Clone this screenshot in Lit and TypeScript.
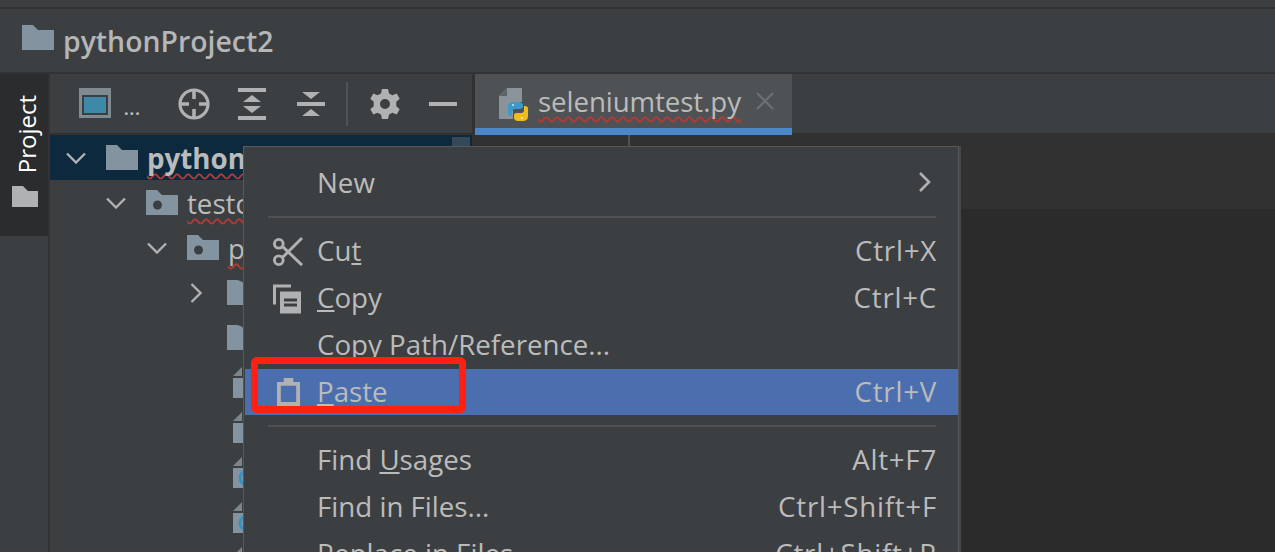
import { LitElement, html, css, svg } from "lit";
import { customElement } from "lit/decorators.js";

const chevDown = html`<svg class="chev" viewBox="0 0 20 12"><path d="M1 1.500 10 10.500 19 1.500" fill="none" stroke="#afb1b3" stroke-width="2.400"/></svg>`;
const chevRight = html`<svg class="chevr" viewBox="0 0 12 20"><path d="M1.500 1 10.500 10 1.500 19" fill="none" stroke="#afb1b3" stroke-width="2.400"/></svg>`;
const folderPath = "M0 0H11L16 5H32V25H0Z";
const folder = (dot = false) => html`<svg class="folder" width="32" height="25" viewBox="0 0 32 25">
  <path d=${folderPath} fill="#8393a0"/>${dot ? svg`<circle cx="11.500" cy="15" r="4.500" fill="#3c3f41"/>` : ""}</svg>`;
const fileIcon = (blue = false) => html`<svg width="26" height="32" viewBox="0 0 26 32">
  <path d="M10 0V9H1Z" fill="#7a858c"/><path d="M1 11H26V31H1Z" fill="#8393a0"/>
  ${blue ? svg`<circle cx="15" cy="21" r="7" fill="none" stroke="#3592c4" stroke-width="3"/>` : ""}</svg>`;
const pageIcon = html`<svg width="26" height="26" viewBox="0 0 26 26"><path d="M0 0H10C16 1 18 4 20 10V25H0Z" fill="#8393a0"/></svg>`;

@customElement("app-root")
export class AppRoot extends LitElement {
  static styles = css`
    :host { display: block; width: 1275px; height: 552px; overflow: hidden; position: relative; background: #3c3f41;
      font-family: "Open Sans", "Noto Sans", sans-serif; color: #bbbbbb; }
    .top { height: 7px; }
    .crumbs { height: 63px; border-top: 2px solid #323232; border-bottom: 2px solid #323232; display: flex; align-items: center; padding-left: 22px; gap: 9px; font-size: 28.4px; font-weight: 600; color: #b4b6b8; }
    .crumbs .folder { margin-bottom: 6px; }
    .main { display: flex; height: 478px; }
    .stripe { width: 48px; flex: none; border-right: 2px solid #323232; }
    .tool-tab { height: 162px; background: #2b2c2e; display: flex; flex-direction: column; align-items: center; justify-content: flex-end; padding-bottom: 29px; box-sizing: border-box; gap: 13px; }
    .tool-tab svg { margin-left: 2px; }
    .vlabel { writing-mode: vertical-rl; transform: rotate(180deg); color: #fff; font-size: 24px; line-height: 30px; margin-left: 5px; }
    .panel { width: 422px; flex: none; display: flex; flex-direction: column; }
    .toolbar { height: 59px; flex: none; display: flex; align-items: center; padding-left: 29px; border-bottom: 2px solid #323232; }
    .toolbar .dots { font-size: 16px; margin: 10px 37px 0 12px; font-weight: 700; letter-spacing: 1px; }
    .tb { display: block; flex: none; }
    .target { margin-right: 28px; }
    .expand { margin-right: 31px; }
    .gear { margin-right: 29px; }
    .tb-sep { width: 2px; height: 44px; background: #515355; margin: 0 22px 0 21px; }
    .row { height: 45px; flex: none; display: flex; align-items: center; font-size: 27.7px; box-sizing: border-box; position: relative; white-space: nowrap; }
    .row.sel { background: #0d293e; font-weight: 700; }
    .thumb { position: absolute; left: 402px; top: 2px; width: 18px; height: 9px; background: #36495a; }
    .wavy { text-decoration: underline wavy #b23a36 2px; text-underline-offset: 4px; text-decoration-skip-ink: none; }
    .chev { width: 20px; height: 12px; flex: none; }
    .chevr { width: 12px; height: 20px; flex: none; }
    .i0 { padding-left: 16px; } .i1 { padding-left: 56px; } .i2 { padding-left: 97px; }
    .i3 { padding-left: 140px; } .i4 { padding-left: 177px; } .i5 { padding-left: 182px; }
    .gap { width: 20px; flex: none; } .gap2 { width: 9px; flex: none; } .gap3 { width: 25px; flex: none; }
    .scroll { width: 3px; flex: none; background: #323232; }
    .editor { flex: 1; display: flex; flex-direction: column; }
    .tabs { height: 59px; display: flex; background: #3c3f41; flex: none; position: relative; z-index: 1; }
    .tab { width: 317px; height: 61px; flex: none; box-sizing: border-box; background: #4e5254; border-bottom: 7px solid #4a88c7; display: flex; align-items: center; padding-left: 24px; font-size: 27.7px; }
    .tab .py { margin-top: 8px; flex: none; }
    .tab .name { margin-left: 8px; letter-spacing: -0.1px; }
    .tab .x { margin-left: 15px; }
    .head { height: 76px; flex: none; background: #313131; display: flex; padding-left: 153px; }
    .head i { width: 2px; background: #515151; display: block; }
    .code { flex: 1; background: #2b2b2b; }
    .menu { position: absolute; left: 243px; top: 146px; width: 716px; height: 420px; box-sizing: border-box; background: #3c3f41; border: 1px solid #575859; box-shadow: 2px 0 0 #45474a; padding: 12px 0 0 1px; font-size: 27.7px; }
    .mi { height: 47px; box-sizing: border-box; display: flex; align-items: center; padding: 0 21px 3px 72px; position: relative; white-space: nowrap; }
    .mi.first { padding-bottom: 1px; }
    .mi .l { flex: 1; }
    .mi .k { letter-spacing: 0.75px; }
    .mi.hi { background: #4b6eaf; height: 46px; padding-bottom: 2px; }
    .mi u { text-underline-offset: 2px; text-decoration-thickness: 2px; }
    .ic { position: absolute; left: 27px; top: 50%; transform: translateY(-50%); display: block; }
    .ic.paste { left: 32px; }
    .sub { margin-right: 6px; }
    .msep { height: 22px; display: flex; align-items: center; padding: 0 22px 0 23px; }
    .msep i { display: block; flex: 1; height: 2px; background: #515151; }
    .red { position: absolute; left: 251px; top: 357px; width: 215px; height: 56px; box-sizing: border-box; border: 7px solid #ff2015; border-radius: 6px; }
  `;
  render() {
    return html`
      <div class="top"></div>
      <div class="crumbs">${folder()}<span>pythonProject2</span></div>
      <div class="main">
        <div class="stripe">
          <div class="tool-tab">
            <span class="vlabel">Project</span>
            <svg width="26" height="21" viewBox="0 0 26 21"><path d="M0 0H11L16 5H26V21H0Z" fill="#afb1b3"/></svg>
          </div>
        </div>
        <div class="panel">
          <div class="toolbar">
            <svg class="tb" width="33" height="31" viewBox="0 0 33 31"><rect width="32" height="30" fill="#7f8b91"/><rect x="3" y="7" width="26" height="20" fill="#3c3f41"/><rect x="5" y="9" width="22" height="16" fill="#3d8aa8"/></svg>
            <span class="dots">...</span>
            <svg class="tb target" width="32" height="32" viewBox="0 0 32 32"><circle cx="16" cy="16" r="14" fill="none" stroke="#afb1b3" stroke-width="3.200"/><path d="M16 3V11M16 21V29M3 16H11M21 16H29" stroke="#afb1b3" stroke-width="3.600"/></svg>
            <svg class="tb expand" width="28" height="32" viewBox="0 0 28 32"><path d="M0 0H28V4H0ZM0 28H28V32H0ZM14 7 23 14H5ZM14 25 5 18H23Z" fill="#afb1b3"/></svg>
            <svg class="tb" width="28" height="28" viewBox="0 0 28 28"><path d="M0 12H28V16H0ZM14 9 5 2H23ZM14 19 23 26H5Z" fill="#afb1b3"/></svg>
            <div class="tb-sep"></div>
            <svg class="tb gear" width="30" height="30" viewBox="0 0 30 30"><path fill-rule="evenodd" fill="#afb1b3" d="M12 0H18L19 4.500 22.500 6.300 26.700 4.500 29.700 9.700 26.300 12.700V17.300L29.700 20.300 26.700 25.500 22.500 23.700 19 25.500 18 30H12L11 25.500 7.500 23.700 3.300 25.500 .3 20.300 3.700 17.300V12.700L.3 9.700 3.300 4.500 7.500 6.300 11 4.500ZM15 10A5 5 0 1 0 15 20A5 5 0 1 0 15 10Z"/></svg>
            <svg class="tb" width="28" height="4" viewBox="0 0 28 4"><rect width="28" height="4" fill="#afb1b3"/></svg>
          </div>
          <div class="row sel i0">${chevDown}<span class="gap"></span>${folder()}<span class="gap2"></span><span class="wavy">python</span><span class="thumb"></span></div>
          <div class="row i1">${chevDown}<span class="gap"></span>${folder(true)}<span class="gap2"></span><span class="wavy">testc</span></div>
          <div class="row i2">${chevDown}<span class="gap"></span>${folder(true)}<span class="gap2"></span><span class="wavy">p</span></div>
          <div class="row i3">${chevRight}<span class="gap3"></span>${pageIcon}</div>
          <div class="row i4">${pageIcon}</div>
          <div class="row i5">${fileIcon()}</div>
          <div class="row i5">${fileIcon()}</div>
          <div class="row i5">${fileIcon(true)}</div>
          <div class="row i5">${fileIcon(true)}</div>
          <div class="row i5">${fileIcon(true)}</div>
        </div>
        <div class="scroll"></div>
        <div class="editor">
          <div class="tabs">
            <div class="tab">
              <svg class="py" width="31" height="34" viewBox="0 0 31 34">
                <path d="M0 8 8 0H23V14H14V31H0Z" fill="#8a939a"/>
                <path d="M8 0V8H0Z" fill="#5d6468"/>
                <path d="M15 14C10 14 9 16 9 19V22C8 28 12 28 13 28V24C13 22 14 21 16 21H21C22 21 24 20 24 19V17C24 15 21 14 19 14Z" fill="#3c9ac9"/>
                <path d="M23 33C28 33 29 31 29 28V23C30 18 27 18 25 18V22C25 24 24 25 22 25H17C16 25 15 26 15 27V30C15 32 17 33 19 33Z" fill="#f0bb1c"/>
                <circle cx="14" cy="17" r="1" fill="#cfe6f2"/><circle cx="23" cy="30" r="1" fill="#fff3c4"/>
              </svg>
              <span class="name wavy">seleniumtest.py</span>
              <svg class="x" width="18" height="18" viewBox="0 0 18 18"><path d="M1 1 17 17M17 1 1 17" stroke="#6e7173" stroke-width="2"/></svg>
            </div>
          </div>
          <div class="head"><i></i></div>
          <div class="code"></div>
        </div>
      </div>
      <div class="menu">
        <div class="mi first"><span class="l">New</span><svg class="sub" width="13" height="20" viewBox="0 0 13 20"><path d="M2 1 11 10 2 19" fill="none" stroke="#afb1b3" stroke-width="2.600"/></svg></div>
        <div class="msep"><i></i></div>
        <div class="mi">
          <svg class="ic" width="31" height="31" viewBox="0 0 32 31"><g fill="none" stroke="#afb1b3" stroke-width="3"><circle cx="7" cy="7" r="4.500"/><circle cx="7" cy="24" r="4.500"/><path d="M11 10 31 29M11 21 31 1"/></g></svg>
          <span class="l">Cu<u>t</u></span><span class="k">Ctrl+X</span></div>
        <div class="mi">
          <svg class="ic" width="30" height="31" viewBox="0 0 30 31"><path d="M1 1H19V4H4V21H1Z" fill="#afb1b3"/><path fill-rule="evenodd" d="M8 8H29V30H8ZM12 15V18H25V15ZM12 20V23H25V20Z" fill="#afb1b3"/></svg>
          <span class="l"><u>C</u>opy</span><span class="k">Ctrl+C</span></div>
        <div class="mi"><span class="l">Copy Path/Reference...</span></div>
        <div class="mi hi">
          <svg class="ic paste" width="23" height="29" viewBox="0 0 24 29"><path fill-rule="evenodd" d="M0 4H7V0H17V4H24V29H0ZM4 8V25H20V8Z" fill="#afb1b3"/></svg>
          <span class="l"><u>P</u>aste</span><span class="k">Ctrl+V</span></div>
        <div class="msep"><i></i></div>
        <div class="mi"><span class="l">Find <u>U</u>sages</span><span class="k">Alt+F7</span></div>
        <div class="mi"><span class="l">Find in Files...</span><span class="k">Ctrl+Shift+F</span></div>
        <div class="mi"><span class="l">Replace in Files...</span><span class="k">Ctrl+Shift+R</span></div>
      </div>
      <div class="red"></div>
    `;
  }
}
